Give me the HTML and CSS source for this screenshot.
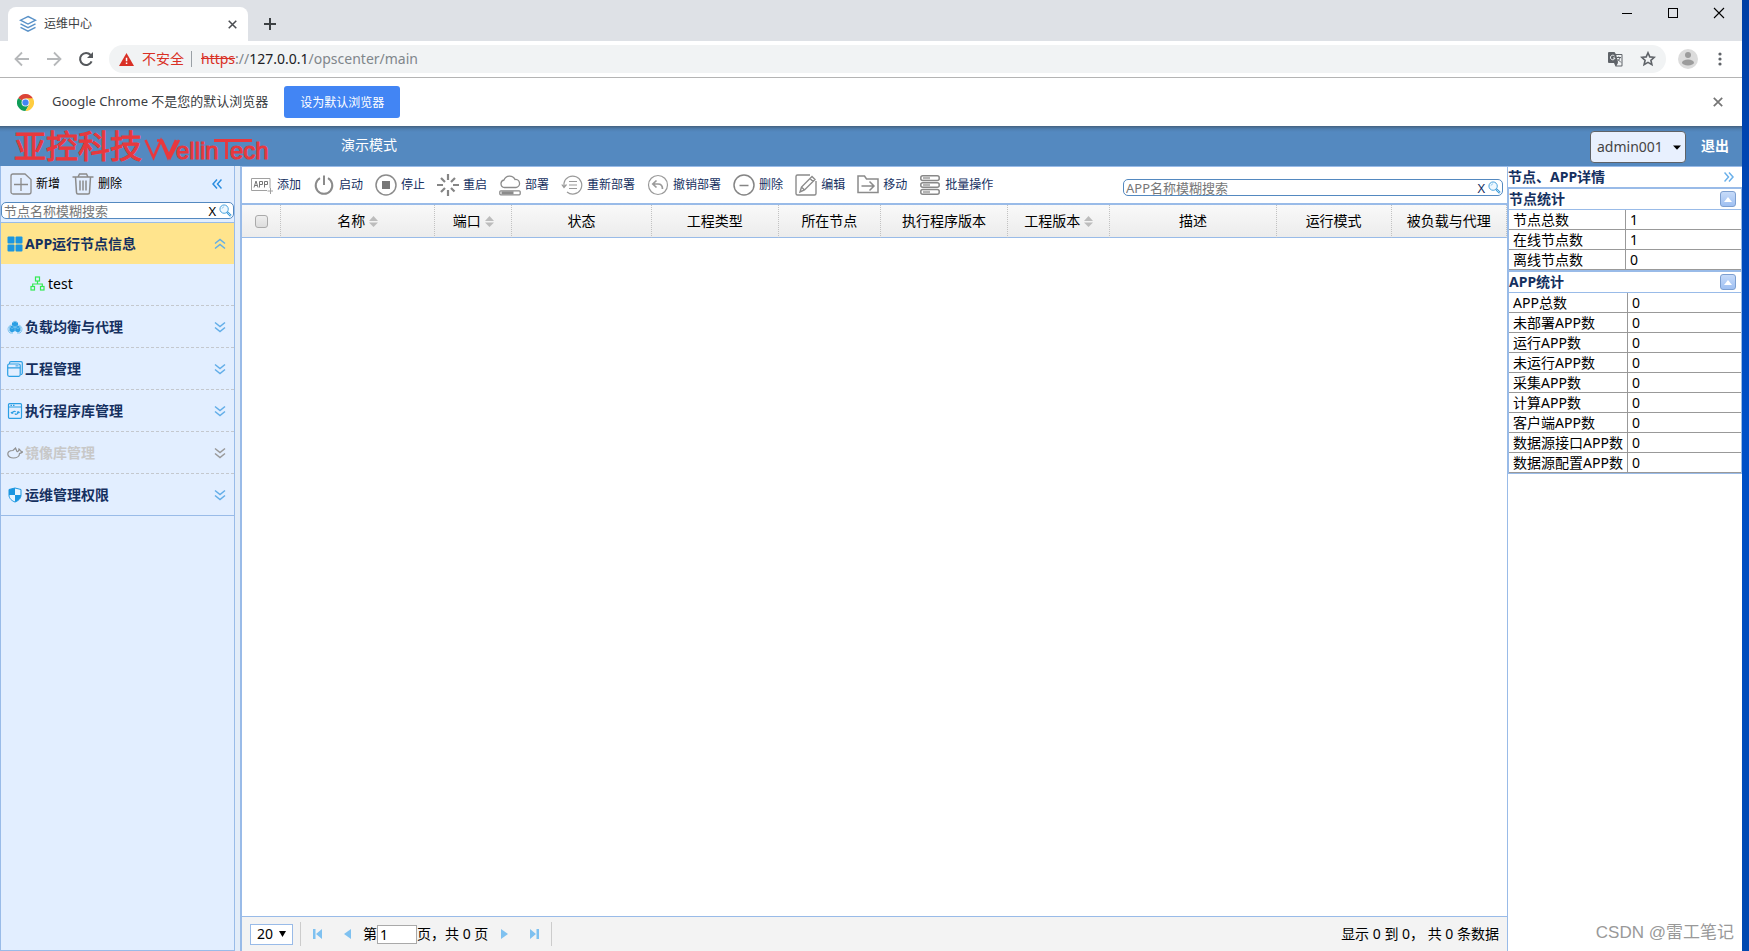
FILE: index.html
```html
<!DOCTYPE html>
<html lang="zh-CN">
<head>
<meta charset="utf-8">
<title>运维中心</title>
<link rel="stylesheet" href="styles.css">
</head>
<body>
<svg class="defs" aria-hidden="true">
  <symbol id="down2" viewBox="0 0 12 12"><path d="M1 1.500l5 4 5-4M1 6.500l5 4 5-4" fill="none" stroke="currentColor" stroke-width="1.500"/></symbol>
  <symbol id="up2" viewBox="0 0 12 12"><path d="M1 5.500l5-4 5 4M1 10.500l5-4 5 4" fill="none" stroke="currentColor" stroke-width="1.500"/></symbol>
  <symbol id="mag" viewBox="0 0 14 14"><circle cx="5.500" cy="5.500" r="4.500" fill="#eef8ff" stroke="#3a9ad9"/><path d="M3.300 5a2.500 2.500 0 0 1 2.200-2" fill="none" stroke="#8cc8ee"/><path d="M9 9l3.800 3.800" stroke="#3a9ad9" stroke-width="2.400"/><path d="M9.500 9.500l3 3" stroke="#d7eefb" stroke-width=".8"/></symbol>
  <symbol id="sort" viewBox="0 0 9 11"><path d="M0 5L4.500 0 9 5zM0 6.500h9L4.500 11z" fill="#bcbcbc"/></symbol>
  <symbol id="cross" viewBox="0 0 10 10"><path d="M.8.8l8.400 8.400M9.200.8L.8 9.200" stroke="currentColor" stroke-width="1.700"/></symbol>
</svg>
<div class="window">
  <div class="tabstrip">
    <div class="tab">
      <svg width="18" height="18" viewBox="0 0 18 18" fill="none" stroke="#5a92c8" stroke-width="1.400"><path d="M9 1.500l7.500 3.700L9 9 1.500 5.200zM1.500 8.800L9 12.600l7.500-3.800M1.500 12.300L9 16.200l7.500-3.900"/></svg>
      <span class="tab-title">运维中心</span>
      <button class="plain" aria-label="关闭标签页"><svg width="9" height="9" class="c-dark"><use href="#cross"/></svg></button>
    </div>
    <button class="plain newtab" aria-label="新标签页"><svg width="12" height="12" viewBox="0 0 12 12"><path d="M6 0v12M0 6h12" stroke="#3c4043" stroke-width="2"/></svg></button>
    <div class="winctl">
      <button class="plain" aria-label="最小化"><svg width="12" height="12" viewBox="0 0 12 12"><path d="M1 6.500h10" stroke="#000"/></svg></button>
      <button class="plain" aria-label="最大化"><svg width="12" height="12" viewBox="0 0 12 12"><rect x="1.500" y="1.500" width="9" height="9" fill="none" stroke="#000"/></svg></button>
      <button class="plain" aria-label="关闭"><svg width="12" height="12" viewBox="0 0 12 12"><path d="M1 1l10 10M11 1L1 11" stroke="#000" stroke-width="1.100"/></svg></button>
    </div>
  </div>
  <div class="navbar">
    <button class="plain" aria-label="后退"><svg width="16" height="16" viewBox="0 0 16 16" fill="none" stroke="#b6b8ba" stroke-width="1.800"><path d="M15 8H2M8 1.500L1.500 8 8 14.500"/></svg></button>
    <button class="plain" aria-label="前进"><svg width="16" height="16" viewBox="0 0 16 16" fill="none" stroke="#b6b8ba" stroke-width="1.800"><path d="M1 8h13M8 1.500L14.500 8 8 14.500"/></svg></button>
    <button class="plain" aria-label="刷新"><svg width="16" height="16" viewBox="0 0 16 16"><path d="M13.600 10.300A6 6 0 1 1 12.600 4" fill="none" stroke="#55585c" stroke-width="2.100"/><path d="M15 1v6H9z" fill="#55585c"/></svg></button>
    <div class="omni">
      <svg width="15" height="13" viewBox="0 0 15 13"><path d="M7.500 0L15 13H0z" fill="#d93025"/><path d="M6.800 4.800h1.500v3.500H6.800zM6.800 9.500h1.500V11H6.800z" fill="#fff"/></svg>
      <span class="unsafe">不安全</span><span class="bar"></span>
      <span class="url"><s>https</s>://<b>127.0.0.1</b>/opscenter/main</span>
      <svg width="15" height="15" viewBox="0 0 15 15"><path d="M1 0h5.500l1.300 2H13.500a1 1 0 0 1 1 1v10.500a1 1 0 0 1-1 1H7.500L6 11H1a1 1 0 0 1-1-1V1a1 1 0 0 1 1-1z" fill="#5f6368"/><path d="M8.300 3h5.200v10.500H8.500L10 11z" fill="#f1f3f4"/><path d="M8.500 5.500h4.500M10.700 4.500v1M12 5.500c-.5 2-1.500 3-3 4M9.500 7l3.500 3.500" stroke="#5f6368" fill="none"/><path d="M6.500 4A2.300 2.300 0 1 0 7 6H5" fill="none" stroke="#f1f3f4"/></svg>
      <svg class="star" width="16" height="16" viewBox="0 0 16 16"><path d="M8 1.800l1.800 4.100 4.500.4-3.400 3 1 4.400L8 11.400l-3.900 2.300 1-4.400-3.400-3 4.500-.4z" fill="none" stroke="#5f6368" stroke-width="1.600"/></svg>
    </div>
    <svg width="20" height="20" viewBox="0 0 20 20"><circle cx="10" cy="10" r="10" fill="#dcdcdc"/><circle cx="10" cy="6" r="3" fill="#9c9c9c"/><ellipse cx="10" cy="13.500" rx="6" ry="3" fill="#9c9c9c"/></svg>
    <button class="plain menu" aria-label="菜单"><svg width="4" height="14" viewBox="0 0 4 14" fill="#5f6368"><circle cx="2" cy="2" r="1.600"/><circle cx="2" cy="7" r="1.600"/><circle cx="2" cy="12" r="1.600"/></svg></button>
  </div>
  <div class="infobar">
    <svg width="17" height="17" viewBox="0 0 18 18"><circle cx="9" cy="9" r="9" fill="#fff"/><path d="M9 9L1.200 4.500A9 9 0 0 1 16.800 4.500z" fill="#db4437"/><path d="M1.200 4.500A9 9 0 0 0 9 18l4-7z" fill="#0f9d58"/><path d="M16.800 4.500H9l4 6.500-4 7a9 9 0 0 0 7.800-13.500z" fill="#ffcd40"/><circle cx="9" cy="9" r="4.200" fill="#f1f1f1"/><circle cx="9" cy="9" r="3.300" fill="#4285f4"/></svg>
    <span class="info-text">Google Chrome 不是您的默认浏览器</span>
    <button class="default-btn">设为默认浏览器</button>
    <button class="plain info-close" aria-label="关闭提示"><svg width="10" height="10" class="c-grey"><use href="#cross"/></svg></button>
  </div>
  <header class="app-head">
    <div class="logo"><span>亚控科技</span>
      <svg width="128" height="38" viewBox="0 -5 128 38"><path d="M1.500 8L9.500 25.500 17 8.500l7 17L32 8M13 8.500h5L26 25.500l9-17.500" fill="none" stroke="#e8383d" stroke-width="2.600"/><path d="M70 8.500h38M82.500 8v19" fill="none" stroke="#e8383d" stroke-width="2.800"/><text x="32" y="27">ellin</text><text x="86" y="27">ech</text></svg>
    </div>
    <span class="mode">演示模式</span>
    <span class="user"><select aria-label="用户"><option>admin001</option></select><svg width="8" height="5" viewBox="0 0 8 5"><path d="M0 .5h8L4 4.800z"/></svg></span>
    <button class="plain logout">退出</button>
  </header>
  <div class="app">
    <aside class="side">
      <div class="side-tools">
        <button class="plain tool"><svg width="22" height="22" viewBox="0 0 22 22" fill="none" stroke="#8b8b8b" stroke-width="1.300"><path d="M3 1h12l6 5.500V19a2 2 0 0 1-2 2H3a2 2 0 0 1-2-2V3a2 2 0 0 1 2-2zM4 11.500h14M11 5v13"/></svg>新增</button>
        <button class="plain tool"><svg width="22" height="22" viewBox="0 0 22 22" fill="none" stroke="#8b8b8b" stroke-width="1.500"><path d="M.5 4h21M6 4l1.500-3h7L16 4M3.500 4l1 15.500a1.500 1.500 0 0 0 1.500 1.500h10a1.500 1.500 0 0 0 1.500-1.500l1-15.500M8 7.500v10M11 7.500v10M14 7.500v10"/></svg>删除</button>
        <button class="plain fold" aria-label="收起"><svg width="10" height="10" viewBox="0 0 10 10" fill="none" stroke="#2a8de0" stroke-width="1.500"><path d="M5 .5L1 5l4 4.500M9.500.5L5.500 5l4 4.500"/></svg></button>
      </div>
      <div class="search"><input type="text" placeholder="节点名称模糊搜索" aria-label="节点名称模糊搜索"><button class="plain">X</button><button class="plain" aria-label="搜索"><svg width="13" height="13"><use href="#mag"/></svg></button></div>
      <nav class="acc">
        <button class="acc-head on"><svg width="16" height="16" viewBox="0 0 16 16" fill="#1b96e0"><rect x=".5" y=".5" width="7" height="7" rx="1"/><rect x="8.500" y=".5" width="7" height="7" rx="1"/><rect x=".5" y="8.500" width="7" height="7" rx="1"/><rect x="8.500" y="8.500" width="7" height="7" rx="1"/></svg><span>APP运行节点信息</span><svg class="chev" width="12" height="12"><use href="#up2"/></svg></button>
        <a class="node" href="#test"><svg width="15" height="15" viewBox="0 0 15 15" fill="none" stroke="#33ea52" stroke-width="1.200"><rect x="5.500" y="1" width="4" height="4"/><rect x="1" y="10.500" width="3.500" height="3.500"/><rect x="10.500" y="10.500" width="3.500" height="3.500"/><path d="M7.500 5v3M2.700 10.500V8h9.600v2.500"/></svg>test</a>
        <button class="acc-head"><svg width="16" height="16" viewBox="0 0 16 16"><path d="M8 2.500l3 1.500v2.500l2.500 1.500v4L11 13.500 8 12l-3 1.500L2.500 12V8L5 6.500V4z" fill="#2b9fe4"/><path d="M5 6.500L8 8l3-1.500M8 8v4M2.500 8L5 9.500 8 8l3 1.500L13.500 8" fill="none" stroke="#8fd0f5" stroke-width=".6"/><path d="M4.500 6C.5 7 0 11.500 3 14h3M11.500 6c4 1 4.500 5.500 1.500 8h-3M5 4a3.500 3.500 0 0 1 6 0" fill="none" stroke="#7cc3ee"/></svg><span>负载均衡与代理</span><svg class="chev" width="12" height="12"><use href="#down2"/></svg></button>
        <button class="acc-head"><svg width="16" height="16" viewBox="0 0 16 16" fill="none" stroke="#2b9fe4" stroke-width="1.200"><rect x=".7" y="3" width="12.500" height="12.300" rx="1.500"/><path d="M.7 6.800h12.500M2.500 3V2.200A1.500 1.500 0 0 1 4 .7h10a1.300 1.300 0 0 1 1.300 1.300v10a1.500 1.500 0 0 1-1.500 1.500"/><path d="M8.500 4.900h3" stroke-width="1"/></svg><span>工程管理</span><svg class="chev" width="12" height="12"><use href="#down2"/></svg></button>
        <button class="acc-head"><svg width="16" height="16" viewBox="0 0 16 16" fill="none" stroke="#2b9fe4" stroke-width="1.200"><rect x="1.500" y=".7" width="13" height="14.600" rx="1"/><path d="M1.500 4h13M3.500 2.400h1.500M6 2.400h1.500M5 10.500c0-2 3-3 3.500-1.500M5 10.500L4 9M5 10.500l1.500-1M11.500 8.500c0 2-3 4-3.500 2M11.500 8.500L10 9.500M11.500 8.500l1 1.500"/></svg><span>执行程序库管理</span><svg class="chev" width="12" height="12"><use href="#down2"/></svg></button>
        <button class="acc-head off" disabled><svg width="16" height="16" viewBox="0 0 16 16" fill="none" stroke="#8f8f8f" stroke-width="1.200"><path d="M.8 9c0-2.500 3-3.500 5.200-3.500L8.500 3 10 6.500c1 .5 2-1 2-2.500 1 .5 1 1.500 1.500 2 .8 0 1.500.5 2 1-1 1-2 1-3 1.500 0 3-3 4.500-6 4.500S.8 11.500.8 9z"/></svg><span>镜像库管理</span><svg class="chev" width="12" height="12"><use href="#down2"/></svg></button>
        <button class="acc-head"><svg width="16" height="16" viewBox="0 0 16 16"><path d="M8 1l6 1.500V8c0 3.500-3 6-6 7-3-1-6-3.500-6-7V2.500z" fill="#e6f4ff" stroke="#1b96e0"/><path d="M8 1v7H2V2.500zM8 8h6c0 3.500-3 6-6 7z" fill="#1b96e0"/></svg><span>运维管理权限</span><svg class="chev" width="12" height="12"><use href="#down2"/></svg></button>
      </nav>
    </aside>
    <div class="split"></div>
    <main class="main">
      <div class="tools">
        <button class="plain tool"><svg width="22" height="22" viewBox="0 0 22 22" fill="none" stroke="#a0a0a0"><path d="M16 16.500H.5v-12h18.500v9.500M19.500 14v6M16.500 17h6"/><path d="M3 13.500l2-6.500 2 6.500M3.800 11.500h2.400M8.500 13.500V7.500h3v3h-3M13.500 13.500V7.500h3v3h-3" stroke="#777"/></svg>添加</button>
        <button class="plain tool"><svg width="22" height="22" viewBox="0 0 22 22" fill="none" stroke="#8b8b8b" stroke-width="2"><path d="M7 4.200A8.300 8.300 0 1 0 15 4.200M11 1.500v9.500"/></svg>启动</button>
        <button class="plain tool"><svg width="22" height="22" viewBox="0 0 22 22"><circle cx="11" cy="11" r="10" fill="none" stroke="#8b8b8b" stroke-width="1.500"/><rect x="7" y="7" width="8" height="8" fill="#777"/></svg>停止</button>
        <button class="plain tool"><svg width="22" height="22" viewBox="0 0 22 22" stroke="#858585" stroke-width="2.200"><path d="M11 0v6M11 16v6M0 11h6M16 11h6M4 4l4 4M14 14l3.500 3.500M4 18l4-4M14 8l4-4"/></svg>重启</button>
        <button class="plain tool"><svg width="22" height="22" viewBox="0 0 22 22" fill="none" stroke="#8b8b8b" stroke-width="1.300"><path d="M5.500 13.500a3.800 3.800 0 0 1-.5-7.500 6 6 0 0 1 11-.5 4 4 0 0 1 1 8z"/><rect x=".8" y="16.800" width="20.400" height="4" rx="1"/><path d="M2.500 18.800h12" stroke-width="3"/></svg>部署</button>
        <button class="plain tool"><svg width="22" height="22" viewBox="0 0 22 22" fill="none" stroke="#9a9a9a" stroke-width="1.200"><path d="M3 9a9 9 0 1 1 3 9M3 9v5M.8 10.500L3 13.500 5.500 10.500M8 7.500h8M8 11h8M8 14.500h8"/></svg>重新部署</button>
        <button class="plain tool"><svg width="22" height="22" viewBox="0 0 22 22" fill="none" stroke="#9a9a9a" stroke-width="1.200"><circle cx="11" cy="11" r="9.500"/><path d="M9.500 6.500L5.800 10l3.700 3.500M6 10h5c3 0 4.500 2 4.500 5" stroke-width="1.700"/></svg>撤销部署</button>
        <button class="plain tool"><svg width="22" height="22" viewBox="0 0 22 22" fill="none" stroke="#858585" stroke-width="1.500"><circle cx="11" cy="11" r="10"/><path d="M6.500 11.500h9"/></svg>删除</button>
        <button class="plain tool"><svg width="22" height="22" viewBox="0 0 22 22" fill="none" stroke="#8b8b8b" stroke-width="1.400"><path d="M15 1H2.500A1.500 1.500 0 0 0 1 2.500v17A1.500 1.500 0 0 0 2.500 21h17a1.500 1.500 0 0 0 1.500-1.500V7M5 18l1.500-5L17 2.500 20 5.500 9.500 16zM15 4.500l3 3M7 13.500l2.500 2.500"/></svg>编辑</button>
        <button class="plain tool"><svg width="22" height="22" viewBox="0 0 22 22" fill="none" stroke="#8b8b8b" stroke-width="1.500"><path d="M1 2h6.500l2 3H21v13.500H1zM4.500 12h12M12.500 7.500L17 12l-4.500 4.500"/></svg>移动</button>
        <button class="plain tool"><svg width="22" height="22" viewBox="0 0 22 22" fill="none" stroke="#888" stroke-width="1.500"><rect x="1.800" y="1.800" width="18.400" height="4.600" rx="2"/><rect x="1.800" y="8.700" width="18.400" height="4.600" rx="2"/><rect x="1.800" y="15.600" width="18.400" height="4.600" rx="2"/><path d="M4 4h7M4 11h7M4 18h7" stroke="#b5b5b5" stroke-width="2.500"/></svg>批量操作</button>
        <div class="search wide"><input type="text" placeholder="APP名称模糊搜索" aria-label="APP名称模糊搜索"><button class="plain">X</button><button class="plain" aria-label="搜索"><svg width="13" height="13"><use href="#mag"/></svg></button></div>
      </div>
      <div class="grid">
        <table class="list">
          <colgroup><col class="w39"><col class="w154"><col class="w77"><col class="w139"><col class="w127"><col class="w102"><col class="w127"><col class="w102"><col class="w166"><col class="w115"><col class="w115"></colgroup>
          <thead><tr><th><input type="checkbox" aria-label="全选"></th><th>名称<svg width="9" height="11"><use href="#sort"/></svg></th><th>端口<svg width="9" height="11"><use href="#sort"/></svg></th><th>状态</th><th>工程类型</th><th>所在节点</th><th>执行程序版本</th><th>工程版本<svg width="9" height="11"><use href="#sort"/></svg></th><th>描述</th><th>运行模式</th><th>被负载与代理</th></tr></thead>
        </table>
      </div>
      <footer class="pager">
        <span class="size"><select aria-label="每页条数"><option>20</option></select><svg width="7" height="6" viewBox="0 0 7 6"><path d="M0 0h7L3.500 6z"/></svg></span>
        <i class="sep"></i>
        <button class="plain first" aria-label="首页"><svg width="9" height="10" viewBox="0 0 9 10" fill="#7fc1f0"><path d="M0 0h2.500v10H0zM9 0v10L3 5z"/></svg></button>
        <button class="plain prev" aria-label="上一页"><svg width="7" height="10" viewBox="0 0 7 10" fill="#7fc1f0"><path d="M7 0v10L0 5z"/></svg></button>
        <label for="page">第</label><input id="page" type="text" value="1"><span>页，共 0 页</span>
        <button class="plain next" aria-label="下一页"><svg width="7" height="10" viewBox="0 0 7 10" fill="#7fc1f0"><path d="M0 0v10l7-5z"/></svg></button>
        <button class="plain last" aria-label="末页"><svg width="9" height="10" viewBox="0 0 9 10" fill="#7fc1f0"><path d="M6.500 0H9v10H6.500zM0 0v10l6-5z"/></svg></button>
        <i class="sep"></i>
        <span class="total">显示 0 到 0， 共 0 条数据</span>
      </footer>
    </main>
    <aside class="info">
      <div class="info-head">节点、APP详情<button class="plain" aria-label="展开"><svg width="10" height="10" viewBox="0 0 10 10" fill="none" stroke="#6ab0ea" stroke-width="1.500"><path d="M.5.5L4.500 5l-4 4.500M5 .5L9 5 5 9.500"/></svg></button></div>
      <section>
        <h2>节点统计<button class="up" aria-label="收起"><svg width="8" height="5" viewBox="0 0 8 5"><path d="M4 0l4 5H0z" fill="#fff"/></svg></button></h2>
        <table class="kv"><tbody><tr><td>节点总数</td><td>1</td></tr><tr><td>在线节点数</td><td>1</td></tr><tr><td>离线节点数</td><td>0</td></tr></tbody></table>
      </section>
      <section>
        <h2>APP统计<button class="up" aria-label="收起"><svg width="8" height="5" viewBox="0 0 8 5"><path d="M4 0l4 5H0z" fill="#fff"/></svg></button></h2>
        <table class="kv kv-app"><tbody><tr><td>APP总数</td><td>0</td></tr><tr><td>未部署APP数</td><td>0</td></tr><tr><td>运行APP数</td><td>0</td></tr><tr><td>未运行APP数</td><td>0</td></tr><tr><td>采集APP数</td><td>0</td></tr><tr><td>计算APP数</td><td>0</td></tr><tr><td>客户端APP数</td><td>0</td></tr><tr><td>数据源接口APP数</td><td>0</td></tr><tr><td>数据源配置APP数</td><td>0</td></tr></tbody></table>
      </section>
      <div class="mark">CSDN @雷工笔记</div>
    </aside>
  </div>
</div>
</body>
</html>
```
FILE: styles.css
```css
* { box-sizing: border-box; }
body {
  margin: 0;
  height: 100vh;
  padding-right: 7px;
  overflow: hidden;
  background: linear-gradient(#003fa5, #0050c8 45%, #0048b0);
  font: 14px/18px "Noto Sans", "Noto Sans CJK SC", sans-serif;
  color: #000;
}
input, select, button { font: inherit; color: inherit; margin: 0; }
svg { display: block; flex: none; }
.defs { position: absolute; width: 0; height: 0; }
.plain { border: 0; padding: 0; background: none; display: flex; align-items: center; }
.c-dark { color: #4a4d51; }
.c-grey { color: #757575; }
.window { height: 100%; display: flex; flex-direction: column; background: #fff; }

.tabstrip { height: 41px; background: #dee1e6; display: flex; padding-left: 8px; flex: none; }
.tab {
  width: 240px; margin-top: 7px; padding: 0 11px;
  background: #fff; border-radius: 8px 8px 0 0;
  display: flex; align-items: center; gap: 7px;
}
.tab-title { flex: 1; font-size: 12px; color: #3c4043; }
.newtab { margin: 7px 0 0 16px; }
.winctl { margin-left: auto; display: flex; gap: 34px; align-items: center; height: 26px; padding-right: 17px; }

.navbar { height: 37px; flex: none; display: flex; align-items: center; gap: 16px; padding: 0 20px 0 14px; border-bottom: 1px solid #b4b4b4; }
.omni {
  flex: 1; height: 28px; border-radius: 14px; background: #f1f3f4;
  display: flex; align-items: center; padding: 0 10px; margin: 0 -4px 0 -1px;
}
.unsafe { color: #d93025; margin-left: 8px; }
.bar { width: 1px; height: 16px; background: #9aa0a6; margin: 0 9px 0 7px; }
.url { flex: 1; color: #80868b; }
.url s { color: #d93025; }
.url b { color: #202124; font-weight: 400; }
.star { margin-left: 17px; }
.menu { margin-left: 4px; }

.infobar { height: 48px; flex: none; display: flex; align-items: center; padding: 0 19px 0 17px; }
.info-text { margin: 0 16px 0 18px; padding-bottom: 2px; font-size: 13px; color: #3c4043; }
.default-btn { width: 116px; height: 32px; border: 0; border-radius: 3px; background: #4285f4; color: #fff; font-size: 12px; padding: 1px 0 0; }
.info-close { margin-left: auto; }

.app-head {
  height: 40px; flex: none; display: flex; align-items: center; color: #fff; padding-right: 13px;
  background: linear-gradient(#44617f, #4f7fb1 3px, #5489c0 6px);
}
.logo { display: flex; align-items: center; width: 341px; padding-left: 14px; }
.logo span { font-size: 32px; line-height: 40px; color: #e8383d; -webkit-text-stroke: 1px #e8383d; }
.logo svg { margin-left: 2px; }
.logo text { font: 24px "Liberation Sans", sans-serif; fill: #e8383d; stroke: #e8383d; stroke-width: 1px; }
.mode { flex: 1; padding-bottom: 2px; }
.user, .size { position: relative; display: flex; }
.user select {
  appearance: none; width: 96px; height: 32px; margin-top: 2px; padding: 0 6px;
  border: 1px solid #5f6368; border-radius: 4px; background: #e8f0fe; color: #444;
}
.user svg { position: absolute; right: 5px; top: 16px; }
.logout { margin-left: 15px; font-weight: 700; }

.app { flex: 1; min-height: 0; display: flex; }
.side { width: 235px; flex: none; background: #e2eeff; border: 1px solid #99bbe8; border-top: 0; }
.side-tools { height: 36px; display: flex; align-items: center; gap: 12px; padding: 0 12px 0 9px; }
.tool { gap: 4px; font-size: 12px; white-space: nowrap; flex: none; }
.fold { margin-left: auto; }
.search {
  height: 17px; display: flex; align-items: center; gap: 3px; padding: 0 1px 0 2px;
  border: 1px solid #5489c0; border-radius: 5px; background: #fff; font-size: 13px;
}
.search input { flex: 1; min-width: 0; height: 15px; padding: 0; border: 0; background: none; outline: 0; }
.search input::placeholder { color: #777; }
.acc { margin-top: 3px; border: solid #99bbe8; border-width: 1px 0; }
.acc-head, .node { width: 100%; display: flex; align-items: center; height: 42px; border: 0; border-bottom: 1px dashed #c4c8ce; background: none; }
.acc-head { gap: 2px; padding: 0 8px 0 6px; font-weight: 700; color: #15305f; text-align: left; }
.acc-head:last-child { height: 41px; border-bottom: 0; }
.acc-head span { flex: 1; }
.acc-head.on { height: 41px; background: #ffe48d; border-bottom: 0; }
.chev { color: #62aee8; }
.acc-head.off { color: #c8c8c8; }
.off .chev { color: #999; }
.node { padding: 0 0 2px 29px; gap: 3px; color: #000; text-decoration: none; }
.split { width: 5px; flex: none; background: #e2ecf8; }

.main { flex: 1; min-width: 0; display: flex; flex-direction: column; border-left: 2px solid #99bbe8; border-top: 1px solid #99bbe8; }
.tools { height: 36px; flex: none; display: flex; align-items: center; gap: 12px; padding: 0 4px 0 9px; color: #15305f; }
.wide { width: 380px; margin: 5px 0 0 auto; }
.grid { flex: 1; border-top: 2px solid #99bbe8; }
.list { width: 100%; table-layout: fixed; border-collapse: separate; border-spacing: 0; }
.list th {
  height: 33px; padding: 0; font-weight: 400; text-align: center;
  background: linear-gradient(#f9f9f9, #ececec);
  border-right: 1px dotted #c2c2c2; border-bottom: 1px solid #99bbe8;
}
.list th svg { display: inline-block; margin-left: 4px; vertical-align: -1px; }
.list input { appearance: none; display: block; width: 13px; height: 13px; margin: 0 auto; border: 1px solid #aaa; border-radius: 3px; background: linear-gradient(#eee, #ddd); }
.w39 { width: 39px; } .w77 { width: 77px; } .w102 { width: 102px; } .w115 { width: 115px; }
.w127 { width: 127px; } .w139 { width: 139px; } .w154 { width: 154px; } .w166 { width: 166px; }
.pager { height: 35px; flex: none; display: flex; align-items: center; padding: 0 8px; background: #f3f3f3; border-top: 1px solid #99bbe8; }
.size select { appearance: none; width: 43px; height: 21px; padding: 0 6px; border: 1px solid #99bbe8; background: #fff; }
.size svg { position: absolute; right: 7px; top: 7px; }
.sep { width: 1px; height: 24px; margin-left: 7px; background: #ccc; }
.first { margin-left: 12px; }
.prev { margin: 0 12px 0 22px; }
.next { margin-left: 13px; }
.last { margin: 0 5px 0 22px; }
.pager input { width: 40px; height: 19px; padding: 0 2px; border: 1px solid #a9a9a9; background: #fff; }
.total { margin-left: auto; white-space: pre; }

.info { width: 235px; flex: none; border-left: 1px solid #99bbe8; border-top: 1px solid #99bbe8; display: flex; flex-direction: column; }
.info-head { height: 20px; padding-right: 8px; display: flex; align-items: center; justify-content: space-between; font-weight: 700; color: #15305f; }
.info section { border: solid #99bbe8; border-width: 2px 1px 1px; margin-bottom: -1px; }
.info h2 { margin: 0; height: 21px; padding-right: 5px; display: flex; align-items: center; justify-content: space-between; font-size: 14px; color: #15305f; border-bottom: 1px solid #99bbe8; }
.up { width: 16px; height: 16px; padding: 0; display: grid; place-items: center; border: 1px solid #7d9fd0; border-radius: 3px; background: linear-gradient(#c7dbf9, #9fc0f2); }
.kv { width: 100%; border-spacing: 0; table-layout: fixed; }
.kv td { height: 20px; padding: 0 4px; line-height: 18px; border-bottom: 1px solid #999; white-space: nowrap; }
.kv td:first-child { width: 117px; border-right: 1px solid #999; }
.kv-app td:first-child { width: 119px; }
.mark { margin-top: auto; padding: 0 8px 6px 0; text-align: right; font-family: "Liberation Sans", "Noto Sans CJK SC", sans-serif; font-size: 17px; line-height: 24px; color: #999; }
```
